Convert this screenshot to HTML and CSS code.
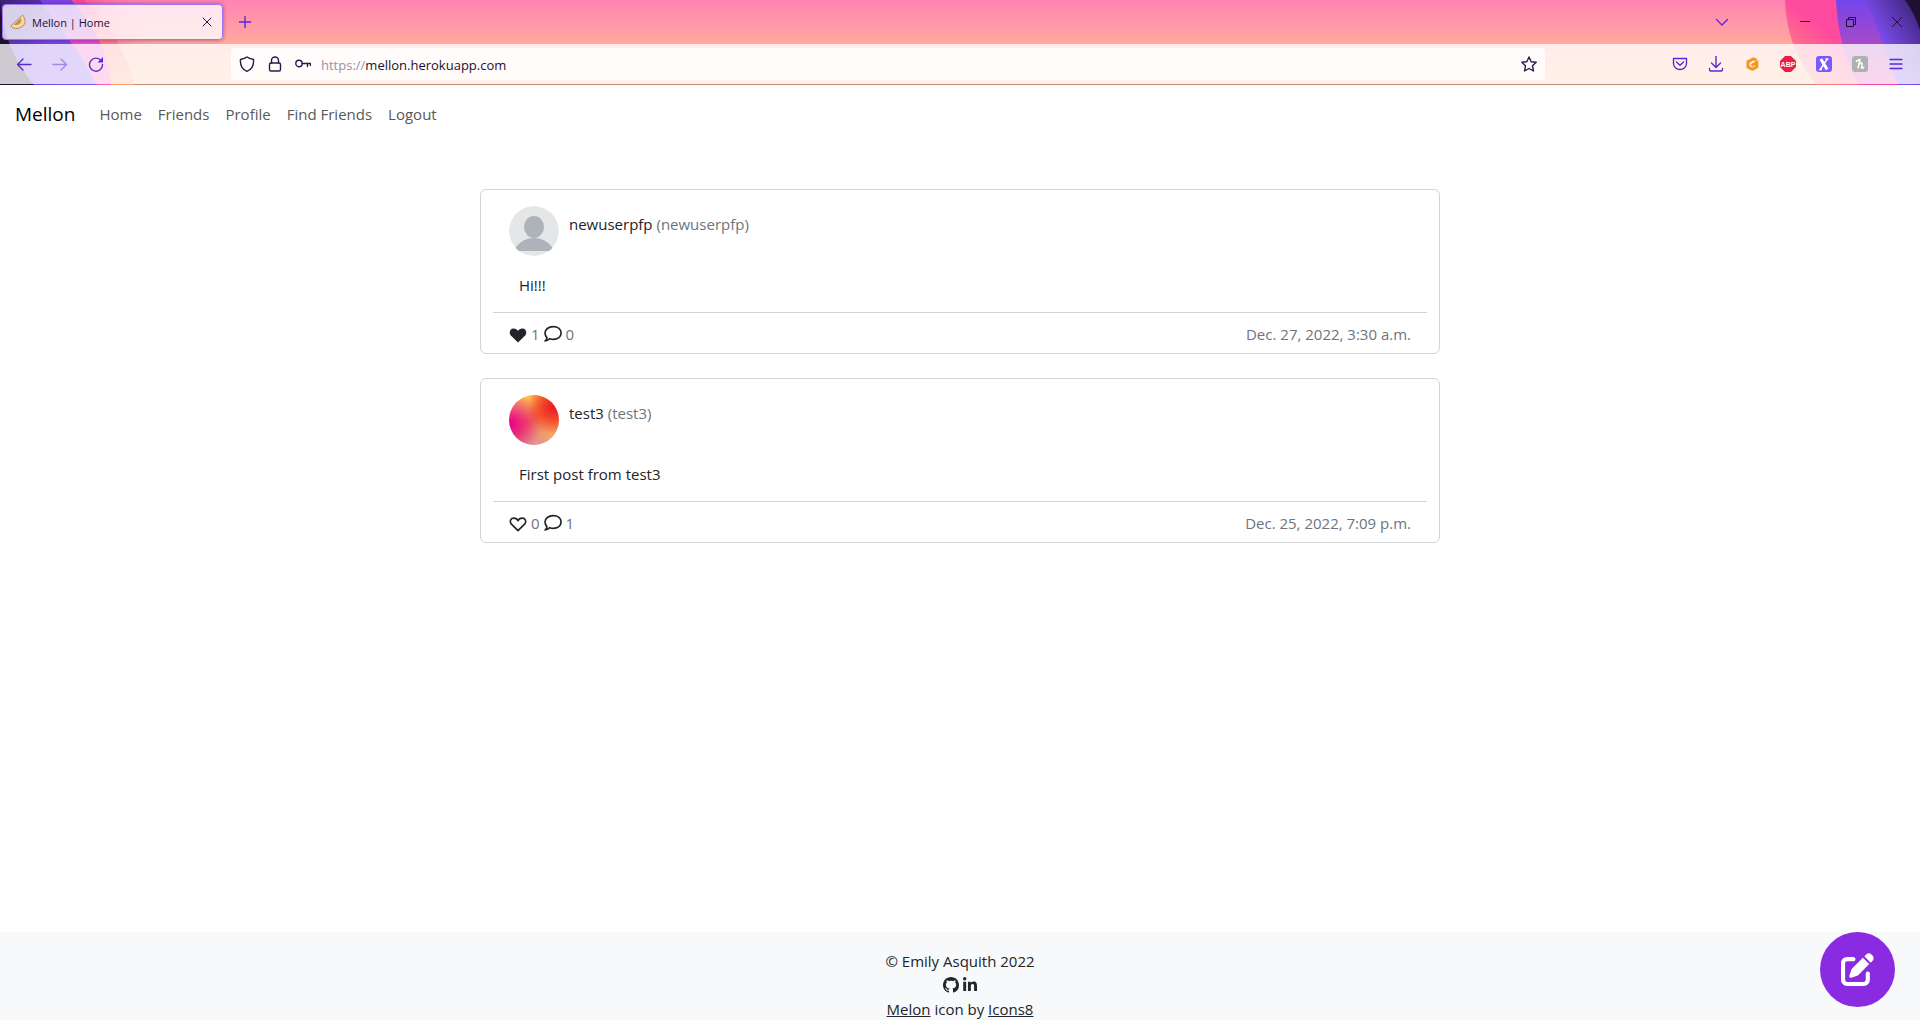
FILE: index.html
```html
<!DOCTYPE html>
<html lang="en">
<head>
<meta charset="utf-8">
<title>Mellon | Home</title>
<link rel="stylesheet" href="styles.css">
</head>
<body>
<header class="browser">
  <svg class="art art-left" viewBox="0 0 150 85" aria-hidden="true">
    <defs>
      <linearGradient id="lp" x1="0" y1="0" x2="1" y2="1"><stop offset="0" stop-color="#3d2478"/><stop offset=".5" stop-color="#7443e2"/><stop offset="1" stop-color="#8350f4"/></linearGradient>
      <linearGradient id="lk" x1="0" y1="0" x2="1" y2="0"><stop offset="0" stop-color="#ff4a9c"/><stop offset="1" stop-color="#ff7fa8" stop-opacity="0"/></linearGradient>
      <linearGradient id="lm" x1="0" y1="0" x2="0" y2="1"><stop offset="0" stop-color="#7a45e4"/><stop offset=".3" stop-color="#a848d0"/><stop offset=".55" stop-color="#f04cc4"/><stop offset="1" stop-color="#ff5cae"/></linearGradient>
      <linearGradient id="lo" x1="0" y1="0" x2="0" y2="1"><stop offset="0" stop-color="#ff4a9c"/><stop offset=".5" stop-color="#ff7a86"/><stop offset="1" stop-color="#ffa070"/></linearGradient>
    </defs>
    <path fill="url(#lk)" d="M70 0H150V44H110Z"/>
    <path fill="url(#lo)" d="M71 0H84Q126 42 134 85H96Z"/>
    <path fill="url(#lm)" d="M36 0H71Q108 40 111 85H80Z"/>
    <path fill="url(#lp)" d="M0 0H40L72 44Q88 66 97 85H0Z"/>
    <path fill="#1e0f33" d="M0 0Q3 48 34 85H0Z"/>
  </svg>
  <svg class="art art-right" viewBox="0 0 160 85" aria-hidden="true">
    <defs>
      <linearGradient id="rb" x1="0" y1="1" x2="1" y2="0"><stop offset=".1" stop-color="#ff8a78"/><stop offset=".5" stop-color="#ff4b9f"/></linearGradient>
      <linearGradient id="rc" x1="0" y1="0" x2="0" y2="1"><stop offset="0" stop-color="#7445ea"/><stop offset=".6" stop-color="#b04ac4"/><stop offset="1" stop-color="#f04cae"/></linearGradient>
      <linearGradient id="rd" x1="1" y1="0" x2="0" y2="1"><stop offset="0" stop-color="#34206a"/><stop offset=".6" stop-color="#7d4cf0"/></linearGradient>
    </defs>
    <path fill="url(#rb)" d="M25 0H100L138 85H56Q26 46 25 0Z"/>
    <path fill="url(#rc)" d="M76 0H130L150 85H99Q78 48 76 0Z"/>
    <path fill="url(#rd)" d="M106 0H160V85H138Q122 40 106 0Z"/>
    <path fill="#1e0f33" d="M145 0Q155 14 160 30V0Z"/>
  </svg>

  <div class="tabstrip">
    <div class="tab">
      <svg class="favicon" viewBox="0 0 16 16" aria-hidden="true"><path fill="#f8dd82" stroke="#b08a78" d="M12.500 1C16 5 16 10.500 11.500 13C8 15.300 3 15 .8 12Z"/><path fill="#b88d73" d="M10.800 4C12 7 11 9 8.800 10.200C7 11.200 5 11.200 3.800 10.800Z"/></svg>
      <span class="tab-title">Mellon | Home</span>
      <button class="icon-btn tab-close" aria-label="Close tab"><svg width="10" height="10" viewBox="0 0 10 10"><path d="M1 1l8 8M9 1l-8 8"/></svg></button>
    </div>
    <button class="icon-btn accent new-tab" aria-label="New tab"><svg width="12" height="12" viewBox="0 0 12 12"><path d="M6 0v12M0 6h12"/></svg></button>
    <div class="window-controls">
      <button class="icon-btn accent list-tabs" aria-label="List all tabs"><svg width="14" height="14" viewBox="0 0 14 14"><path d="M1.500 4.500L7 10l5.500-5.500"/></svg></button>
      <button class="icon-btn win" aria-label="Minimize"><svg width="10" height="10" viewBox="0 0 10 10"><path d="M0 4.500h10"/></svg></button>
      <button class="icon-btn win" aria-label="Restore"><svg width="10" height="10" viewBox="0 0 10 10"><path d="M.5 2.500h7v7h-7zM2.500 2.500v-2h7v7h-2"/></svg></button>
      <button class="icon-btn win" aria-label="Close"><svg width="10" height="10" viewBox="0 0 10 10"><path d="M0 0l10 10M10 0L0 10"/></svg></button>
    </div>
  </div>

  <div class="toolbar">
    <div class="nav-buttons">
      <button class="icon-btn accent" aria-label="Back"><svg width="16" height="16" viewBox="0 0 16 16"><path d="M15 8.500H2M7 3L1.500 8.500L7 14"/></svg></button>
      <button class="icon-btn accent faded" aria-label="Forward"><svg width="16" height="16" viewBox="0 0 16 16"><path d="M1 8.500h13M9 3l5.500 5.500L9 14"/></svg></button>
      <button class="icon-btn accent" aria-label="Reload"><svg width="16" height="16" viewBox="0 0 16 16"><path d="M13 4.500A6.500 6.500 0 1 0 14.500 8.500"/><path class="solid" d="M15 1v5.500H9.500Z"/></svg></button>
    </div>
    <div class="urlbar">
      <svg width="16" height="16" viewBox="0 0 16 16" aria-hidden="true"><path d="M8 1C6 2.500 4 3 1.500 3.500C1 9 3.500 13.500 8 15.300C12.500 13.500 15 9 14.500 3.500C12 3 10 2.500 8 1Z"/></svg>
      <svg width="16" height="16" viewBox="0 0 16 16" aria-hidden="true"><path d="M4.500 7V4.500a3.500 3.500 0 0 1 7 0V7"/><rect x="2.500" y="7" width="11" height="8" rx="1.500"/></svg>
      <svg width="16" height="16" viewBox="0 0 16 16" aria-hidden="true"><circle cx="4" cy="7.500" r="3.200"/><path d="M7.200 7.500H15.500V9.500M12.500 7.500v3"/></svg>
      <label class="url"><span class="scheme">https://</span><input aria-label="Address" value="mellon.herokuapp.com"></label>
      <button class="icon-btn" aria-label="Bookmark"><svg width="16" height="16" viewBox="0 0 16 16"><path d="M8 1l2.200 4.700 5 .6-3.700 3.500 1 5.200L8 12.500 3.500 15l1-5.200L.8 6.300l5-.6Z"/></svg></button>
    </div>
    <div class="extensions">
      <button class="icon-btn accent" aria-label="Pocket"><svg width="16" height="16" viewBox="0 0 16 16"><path d="M1.500 2.500h13v5a6.500 6 0 0 1-13 0ZM4.500 6L8 9.300 11.500 6"/></svg></button>
      <button class="icon-btn accent" aria-label="Downloads"><svg width="16" height="16" viewBox="0 0 16 16"><path d="M8 0v11M3.500 7L8 11.500 12.500 7M1.500 12.500v1a1.500 1.500 0 0 0 1.500 1.500h10a1.500 1.500 0 0 0 1.500-1.500v-1"/></svg></button>
      <button class="icon-btn" aria-label="Coupons"><svg width="16" height="16" viewBox="0 0 16 16"><path class="gold" d="M12.500 4.200L9.500 2.800 4 5.600v5.400L8.500 13.300 12.800 10.800V6.500L7.500 9.500"/></svg></button>
      <button class="icon-btn" aria-label="Adblock Plus"><svg width="16" height="16" viewBox="0 0 16 16"><path class="abp" d="M5 0h6l5 5v6l-5 5H5l-5-5V5Z"/><text x="8" y="11">ABP</text></svg></button>
      <button class="icon-btn" aria-label="Extension X"><svg width="16" height="16" viewBox="0 0 16 16"><rect class="xbox" width="16" height="16" rx="3"/><path class="white" d="M4.800 3l6.400 10.500"/><path class="white slim" d="M11.200 3L4.300 13.500M9.500 3h3M3 13.500h3"/></svg></button>
      <button class="icon-btn" aria-label="Honey"><svg width="16" height="16" viewBox="0 0 16 16"><rect class="honey" width="16" height="16" rx="3"/><path class="white slim" d="M4 6Q5 4 8 3.500L6 12.500M6.800 8.500Q9.800 5.500 10 8T9.500 11.500Q10.500 13 12 11"/></svg></button>
      <button class="icon-btn accent" aria-label="Menu"><svg width="16" height="16" viewBox="0 0 16 16"><path d="M2 3.500h12M2 8h12M2 12.500h12"/></svg></button>
    </div>
  </div>
</header>

<nav class="navbar">
  <a class="brand" href="#">Mellon</a>
  <a href="#">Home</a><a href="#">Friends</a><a href="#">Profile</a><a href="#">Find Friends</a><a href="#">Logout</a>
</nav>

<main class="feed">
  <article class="post">
    <div class="author">
      <svg class="avatar" viewBox="0 0 50 50" aria-hidden="true"><circle cx="25" cy="25" r="25" fill="#e4e6e8"/><ellipse cx="25" cy="21" rx="10" ry="11" fill="#adb3b8"/><path fill="#adb3b8" d="M6 45Q7 42 7 41Q14 32 25 32T43 41L44 45Z"/></svg>
      <p>newuserpfp <span class="muted">(newuserpfp)</span></p>
    </div>
    <p class="body">Hi!!!</p>
    <footer class="meta">
      <button class="stat" aria-label="Unlike"><svg width="18" height="18" viewBox="0 0 16 16"><path class="solid" d="M8 15.500L1.400 9.200C-.2 7 .8 3 4 3 6 3 7.300 4 8 5 8.700 4 10 3 12 3c3.200 0 4.200 4 2.600 6.200Z"/></svg></button><span>1</span>
      <button class="stat" aria-label="Comments"><svg width="18" height="18" viewBox="0 0 16 16"><path d="M1 14.200C2.200 13.500 2.600 12.200 2.600 11.200 1.500 10 .9 8.800.9 7.200.9 3.800 4 1.500 8.200 1.500S15.200 3.800 15.200 7.200 12.200 12.800 8.200 12.800C7 12.800 6 12.600 5.200 12.200 4 13.300 2.600 14.200 1 14.200Z"/></svg></button><span>0</span>
      <time>Dec. 27, 2022, 3:30 a.m.</time>
    </footer>
  </article>
  <article class="post">
    <div class="author">
      <span class="avatar gradient"></span>
      <p>test3 <span class="muted">(test3)</span></p>
    </div>
    <p class="body">First post from test3</p>
    <footer class="meta">
      <button class="stat" aria-label="Like"><svg width="18" height="18" viewBox="0 0 16 16"><path d="M8 14.800L1.900 8.800C.4 6.500 1.500 3.600 4.200 3.600 6 3.600 7.400 4.600 8 6 8.600 4.600 10 3.600 11.800 3.600c2.700 0 3.800 2.900 2.300 5.200Z"/></svg></button><span>0</span>
      <button class="stat" aria-label="Comments"><svg width="18" height="18" viewBox="0 0 16 16"><path d="M1 14.200C2.200 13.500 2.600 12.200 2.600 11.200 1.500 10 .9 8.800.9 7.200.9 3.800 4 1.500 8.200 1.500S15.200 3.800 15.200 7.200 12.200 12.800 8.200 12.800C7 12.800 6 12.600 5.200 12.200 4 13.300 2.600 14.200 1 14.200Z"/></svg></button><span>1</span>
      <time>Dec. 25, 2022, 7:09 p.m.</time>
    </footer>
  </article>
</main>

<footer class="site-footer">
  <p>© Emily Asquith 2022</p>
  <div class="social">
    <a href="#" aria-label="GitHub"><svg width="16" height="16" viewBox="0 0 16 16"><path d="M8 0C3.580 0 0 3.580 0 8c0 3.540 2.290 6.530 5.470 7.590.4.070.55-.17.55-.38 0-.19-.01-.82-.01-1.490-2.010.37-2.530-.49-2.690-.94-.09-.23-.48-.94-.82-1.130-.28-.15-.68-.52-.01-.53.63-.01 1.080.58 1.230.82.72 1.210 1.870.87 2.330.66.07-.52.28-.87.51-1.070-1.780-.2-3.640-.89-3.640-3.950 0-.87.31-1.590.82-2.150-.08-.2-.36-1.020.08-2.120 0 0 .67-.21 2.200.82.64-.18 1.320-.27 2-.27s1.360.09 2 .27c1.530-1.040 2.200-.82 2.200-.82.44 1.100.16 1.920.08 2.120.51.56.82 1.270.82 2.150 0 3.070-1.870 3.750-3.650 3.950.29.25.54.73.54 1.480 0 1.070-.01 1.930-.01 2.200 0 .21.15.46.55.38A8 8 0 0 0 16 8c0-4.420-3.580-8-8-8Z"/></svg></a>
    <a href="#" aria-label="LinkedIn"><svg width="14" height="16" viewBox="0 0 448 512"><path d="M100.280 448H7.400V148.900h92.880zM53.790 108.100C24.090 108.100 0 83.500 0 53.800a53.790 53.790 0 0 1 107.580 0c0 29.700-24.100 54.300-53.790 54.300zM447.900 448h-92.680V302.400c0-34.700-.7-79.200-48.290-79.200-48.290 0-55.690 37.700-55.690 76.700V448h-92.780V148.900h89.080v40.800h1.300c12.400-23.500 42.690-48.300 87.880-48.300 94 0 111.280 61.900 111.280 142.300V448z"/></svg></a>
  </div>
  <p><a href="#">Melon</a> icon by <a href="#">Icons8</a></p>
</footer>

<button class="compose" aria-label="New post"><svg width="33" height="33" viewBox="0 0 512 512"><path d="M490.300 40.400C512.200 62.270 512.200 97.730 490.300 119.600L460.300 149.700L362.300 51.720L392.400 21.660C414.300-.214 449.700-.214 471.600 21.660zM172.400 241.700L339.700 74.340L437.700 172.300L270.300 339.600C264.200 345.800 256.700 350.400 248.400 353.200L159.600 382.800C150.100 385.600 141.500 383.400 135 376.100C128.600 370.500 126.400 361 129.200 352.400L158.800 263.600C161.600 255.300 166.200 247.800 172.400 241.700zM192 63.100C209.700 63.100 224 78.330 224 95.100C224 113.700 209.700 127.100 192 127.100H96C78.330 127.100 64 142.300 64 159.100V416C64 433.700 78.330 448 96 448H352C369.700 448 384 433.700 384 416V319.100C384 302.300 398.300 287.100 416 287.100C433.700 287.100 448 302.300 448 319.100V416C448 469 405 512 352 512H96C42.980 512 0 469 0 416V159.100C0 106.100 42.980 63.100 96 63.100H192z"/></svg></button>
</body>
</html>
```
FILE: styles.css
```css
* { box-sizing: border-box; }
body {
  margin: 0;
  min-height: 100vh;
  display: flex;
  flex-direction: column;
  overflow: hidden;
  background: #fff;
  color: #212529;
  font: 15px/24px "Open Sans", "Noto Sans", sans-serif;
}
p { margin: 0; }
a { color: inherit; }
button { padding: 0; border: 0; background: none; color: inherit; font: inherit; }
svg { display: block; flex: none; }

/* Browser window */
.browser {
  position: relative;
  padding-bottom: 1px;
  overflow: hidden;
  background: linear-gradient(#ff84b4 0, #ffa99e 44px, #ffc490 84px, #c08a78 84px);
  color: #2b1a4a;
  font-size: 12px;
}
.art { position: absolute; top: 0; height: 85px; }
.art-left { left: 0; width: 150px; }
.art-right { right: 0; width: 160px; }
.icon-btn { display: flex; align-items: center; justify-content: center; }
.icon-btn svg, .urlbar > svg { fill: none; stroke: currentColor; stroke-width: 1.400px; stroke-linecap: round; stroke-linejoin: round; }
.icon-btn.tab-close svg { stroke-width: 1px; }
.accent { color: #5a2ad0; }
.faded { opacity: .45; }
.icon-btn .solid { fill: currentColor; stroke: none; }
.tabstrip { position: relative; display: flex; align-items: center; height: 44px; padding-left: 2px; }
.tab {
  display: flex;
  align-items: center;
  gap: 6px;
  width: 221px;
  height: 36px;
  padding: 0 10px 0 7px;
  border: 1px solid #a173f5;
  border-radius: 4px;
  background: rgba(255, 255, 255, .78);
  box-shadow: 0 0 4px rgba(60, 20, 100, .5);
}
.favicon { width: 16px; height: 16px; }
.tab-title { flex: 1; padding-top: 2px; color: #1e0f33; font-size: 11px; }
.new-tab { margin-left: 16px; }
.window-controls { display: flex; margin-left: auto; }
.list-tabs { width: 46px; margin-right: 37px; }
.win { width: 46px; height: 44px; color: #1e0f33; }
.icon-btn.win svg { stroke-width: 1px; stroke-linecap: butt; }
.toolbar {
  position: relative;
  display: grid;
  grid-template-columns: 231px 1fr 375px;
  align-items: center;
  height: 40px;
  background: rgba(255, 255, 255, .78);
}
.nav-buttons { display: flex; gap: 20px; padding-left: 16px; }
.urlbar {
  display: flex;
  align-items: center;
  gap: 12px;
  height: 32px;
  padding: 0 8px;
  border-radius: 4px;
  background: rgba(255, 255, 255, .8);
}
.url { display: flex; flex: 1; margin-left: -2px; padding-top: 2px; font-size: 13px; }
.scheme { color: #9a8fae; }
.url input { flex: 1; padding: 0; border: 0; background: none; color: #1e0f33; font: inherit; outline: 0; }
.extensions { display: flex; justify-content: flex-end; gap: 20px; padding-right: 16px; }
.icon-btn .gold { stroke: #f6981c; stroke-width: 3px; stroke-linejoin: miter; stroke-linecap: butt; }
.icon-btn .abp { fill: #ed1e45; stroke: none; }
.icon-btn text { fill: #fff; stroke: none; font: bold 7px "Liberation Sans", sans-serif; text-anchor: middle; }
.xbox { fill: #7a58ff; stroke: none; }
.honey { fill: #afb1b0; stroke: none; }
.white { stroke: #fff; stroke-width: 3px; stroke-linecap: butt; }
.white.slim { stroke-width: 1.500px; }

/* Site navigation */
.navbar { display: flex; align-items: center; gap: 16px; height: 58px; padding: 0 15px; }
.navbar a { color: #595959; text-decoration: none; }
.navbar .brand { margin-right: 8px; color: #000; font-size: 19px; }

/* Posts */
.feed { flex: 1; display: flex; flex-direction: column; gap: 24px; width: 50%; margin: 0 auto; padding-top: 46px; }
.post { padding: 16px 12px 7px; border: 1px solid #d2d3d4; border-radius: 6px; }
.author { display: flex; gap: 10px; padding: 0 16px; }
.author p { padding-top: 6px; }
.avatar { width: 50px; height: 50px; border-radius: 50%; }
.gradient {
  background:
    radial-gradient(circle at 2% 58%, #e8008a, rgba(232, 0, 138, 0) 55%),
    radial-gradient(circle at 90% 25%, #ed1c24, rgba(237, 28, 36, 0) 45%),
    radial-gradient(circle at 35% 0, #ffc850, rgba(255, 190, 70, 0) 45%),
    radial-gradient(circle at 5% 25%, #f4a090, rgba(244, 150, 130, 0) 40%),
    radial-gradient(circle at 45% 105%, #dd9aa0, rgba(221, 140, 150, 0) 55%),
    radial-gradient(circle at 90% 90%, #ffb85c, rgba(255, 176, 80, 0) 55%),
    #f15a28;
}
.muted, .meta { color: #6c757d; }
.body { margin: 17px 26px 15px; }
.meta { display: flex; align-items: center; gap: 4px; padding: 9px 16px 0; border-top: 1px solid #d2d3d4; }
.meta time { margin-left: auto; }
.stat { color: #212529; }
.stat svg { fill: none; stroke: currentColor; stroke-width: 1.500px; stroke-linejoin: round; }
.stat .solid { fill: currentColor; stroke: none; }

/* Site footer */
.site-footer { height: 88px; padding-top: 17px; background: #f8f9fa; text-align: center; }
.social { display: flex; align-items: center; justify-content: center; gap: 4px; height: 24px; }
.social svg { fill: currentColor; }
.compose {
  position: fixed;
  right: 25px;
  bottom: 13px;
  display: flex;
  align-items: center;
  justify-content: center;
  width: 75px;
  height: 75px;
  border-radius: 50%;
  background: #8a2be2;
}
.compose svg { fill: #fff; }
```
